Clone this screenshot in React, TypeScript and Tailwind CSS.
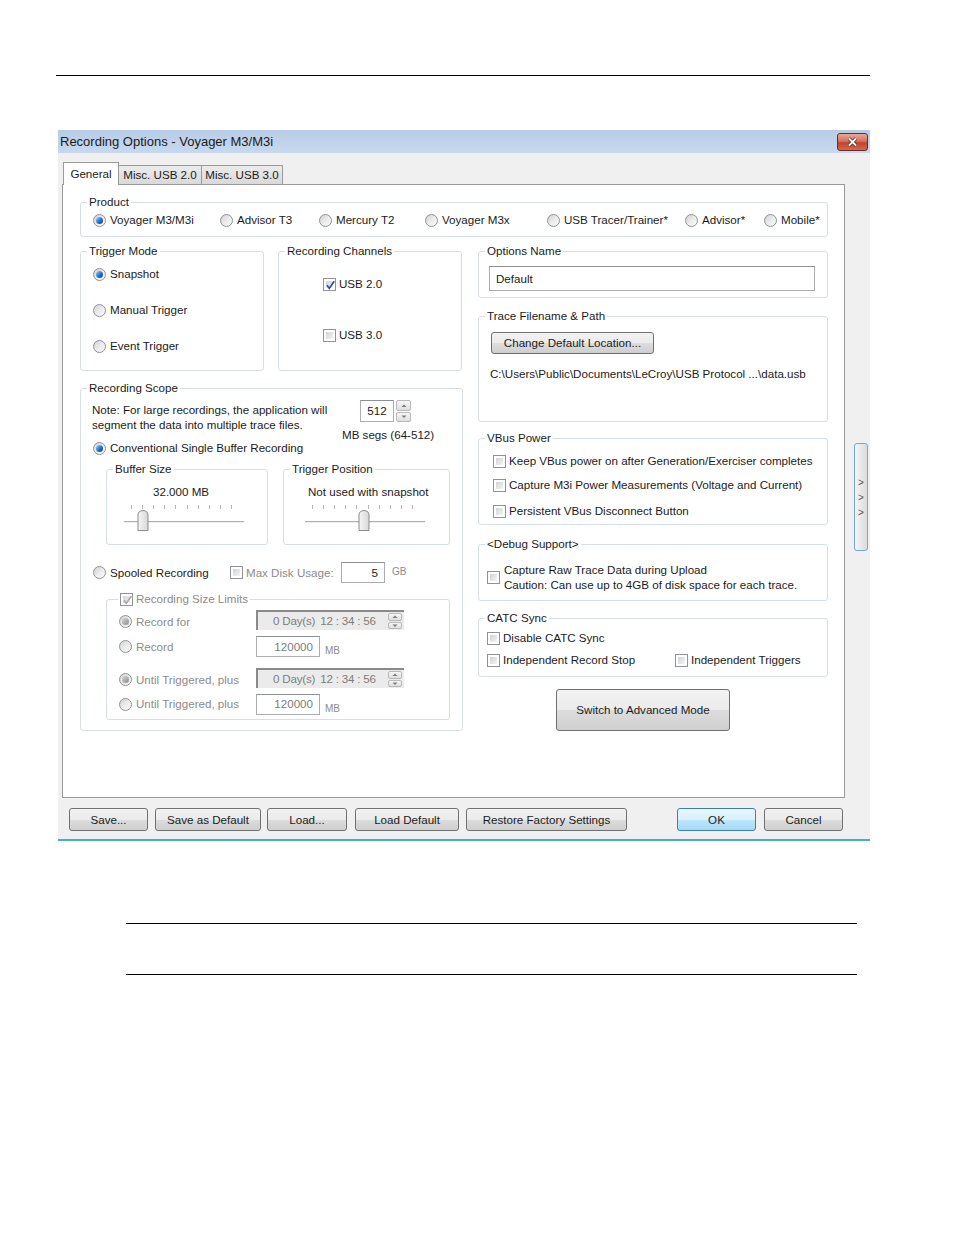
import type { ReactNode } from "react";

const DIM = "text-[#8c8c8c]";
const GROUP_BORDER = "border-[#d5dfe5]";
const BTN =
  "flex shrink-0 items-center justify-center rounded-[3px] border border-[#707070] bg-[linear-gradient(#f2f2f2,#ebebeb_50%,#dddddd_51%,#cfcfcf)] leading-[14px]";
const TEXTBOX = "border border-[#abadb3] border-t-[#8d9096] bg-white";

function Group({
  title,
  className = "",
  titleClass = "left-[6px]",
  children,
}: {
  title: ReactNode;
  className?: string;
  titleClass?: string;
  children?: ReactNode;
}) {
  return (
    <div className={`relative shrink-0 rounded-[3px] border ${GROUP_BORDER} ${className}`}>
      <span className={`absolute -top-[8px] flex bg-white px-[2px] leading-[14px] ${titleClass}`}>
        {title}
      </span>
      {children}
    </div>
  );
}

/** Fixed-width slot so a row of controls lines up with the dialog's columns. */
function Cell({ w, children }: { w: string; children: ReactNode }) {
  return <span className={`flex shrink-0 items-center ${w}`}>{children}</span>;
}

function Radio({
  label,
  checked = false,
  disabled = false,
  className = "",
}: {
  label: string;
  checked?: boolean;
  disabled?: boolean;
  className?: string;
}) {
  return (
    <span className={`flex shrink-0 items-center gap-[4px] leading-[14px] ${className}`}>
      <span className="flex h-[13px] w-[13px] shrink-0 items-center justify-center rounded-full border border-[#8f9397] bg-gradient-to-br from-[#cfd2d5] via-[#ebebeb] to-[#fbfbfb]">
        {checked ? (
          <span
            className={`h-[7px] w-[7px] rounded-full ${
              disabled
                ? "bg-gradient-to-br from-[#d8d8d8] to-[#8a8a8a]"
                : "bg-gradient-to-br from-[#9ad6ff] via-[#2a7ad0] to-[#0c3c82]"
            }`}
          />
        ) : null}
      </span>
      <span className={disabled ? DIM : ""}>{label}</span>
    </span>
  );
}

function Check({
  label,
  checked = false,
  disabled = false,
  gap = "gap-[3px]",
  className = "",
}: {
  label?: ReactNode;
  checked?: boolean;
  disabled?: boolean;
  gap?: string;
  className?: string;
}) {
  return (
    <span className={`flex shrink-0 items-center leading-[14px] ${gap} ${className}`}>
      <span className="relative h-[13px] w-[13px] shrink-0 border border-[#8f9397] bg-white p-[2px]">
        <span className="block h-full w-full bg-gradient-to-br from-[#d0d3d7] to-[#f5f5f5]" />
        {checked ? (
          <svg className="absolute inset-0" viewBox="0 0 13 13" width="13" height="13">
            <path
              d="M3 6.3 L5.3 9.4 L10.2 2.2"
              fill="none"
              stroke={disabled ? "#a8a8a8" : "#2c4f8f"}
              strokeWidth="1.7"
            />
          </svg>
        ) : null}
      </span>
      {label != null ? <span className={disabled ? DIM : ""}>{label}</span> : null}
    </span>
  );
}

function SpinArrows({ className = "" }: { className?: string }) {
  return (
    <span className={`flex shrink-0 flex-col gap-px ${className}`}>
      {["M1.5 4 L4 1.5 L6.5 4 Z", "M1.5 1.5 L4 4 L6.5 1.5 Z"].map((d) => (
        <span
          key={d}
          className="flex flex-1 items-center justify-center rounded-[2px] border border-[#b9b9b9] bg-gradient-to-b from-[#f7f7f7] to-[#dedede]"
        >
          <svg width="8" height="5" viewBox="0 0 8 5">
            <path d={d} fill="#7a7a7a" />
          </svg>
        </span>
      ))}
    </span>
  );
}

function TimeBox() {
  return (
    <span className="flex h-[20px] w-[148px] shrink-0 items-center border-l-2 border-t-2 border-[#8a8a8a] bg-[#ebebeb] pl-[15px] pr-[2px] text-[#7d7d7d]">
      <span className="tracking-[-0.2px]">0 Day(s)</span>
      <span className="ml-[5px] tracking-[-0.2px]">12 : 34 : 56</span>
      <SpinArrows className="ml-auto h-[16px] w-[14px]" />
    </span>
  );
}

function MbBox({ value }: { value: string }) {
  return (
    <span className={`flex h-[21px] w-[64px] shrink-0 items-center justify-end pr-[6px] text-[#7d7d7d] ${TEXTBOX}`}>
      {value}
    </span>
  );
}

function Slider({ thumb, track }: { thumb: string; track: string }) {
  return (
    <div className={`relative mt-[5px] h-[27px] w-[120px] ${track}`}>
      <div className="ml-[7px] flex w-[101px] justify-between pt-px">
        {Array.from({ length: 10 }, (_, i) => (
          <span key={i} className="h-[4px] w-px bg-[#b5b5b5]" />
        ))}
      </div>
      <div className="absolute left-0 right-0 top-[17px] h-[2px] border-t border-[#b0b0b0] bg-[#eeeeee]" />
      <svg className={`absolute top-[6px] ${thumb}`} width="12" height="21" viewBox="0 0 12 21">
        <defs>
          <linearGradient id="thumbfill" x1="0" x2="1" y1="0" y2="0">
            <stop offset="0" stopColor="#f6f6f6" />
            <stop offset="1" stopColor="#d8d8d8" />
          </linearGradient>
        </defs>
        <path
          d="M1 20.5 V5 Q1 0.8 6 0.5 Q11 0.8 11 5 V20.5 Z"
          fill="url(#thumbfill)"
          stroke="#8c8c8c"
        />
      </svg>
    </div>
  );
}

function CloseButton() {
  return (
    <span className="flex h-[18px] w-[31px] items-center justify-center rounded-[3px] border border-[#6f2a22] bg-[linear-gradient(#e9a99b,#d8705e_45%,#c2432f_55%,#cf6a54)]">
      <svg width="11" height="10" viewBox="0 0 11 10">
        <path d="M2 1.5 L9 8.5 M9 1.5 L2 8.5" stroke="#5a1a12" strokeWidth="3.2" />
        <path d="M2 1.5 L9 8.5 M9 1.5 L2 8.5" stroke="#ffffff" strokeWidth="1.8" />
      </svg>
    </span>
  );
}

function Tabs() {
  return (
    <div className="ml-px flex h-[22px] items-end">
      <span className="relative z-10 -mb-px flex h-[23px] w-[56px] items-center justify-center border border-b-0 border-[#9a9a9a] bg-white">
        General
      </span>
      <span className="flex h-[19px] w-[83px] items-center justify-center border border-b-0 border-l-0 border-[#9a9a9a] bg-gradient-to-b from-[#ececec] to-[#d9d9d9]">
        Misc. USB 2.0
      </span>
      <span className="flex h-[19px] w-[81px] items-center justify-center border border-b-0 border-l-0 border-[#9a9a9a] bg-gradient-to-b from-[#ececec] to-[#d9d9d9]">
        Misc. USB 3.0
      </span>
    </div>
  );
}

function LeftColumn() {
  return (
    <div className="flex w-[383px] shrink-0 flex-col">
      <div className="flex gap-[14px]">
        <Group title="Trigger Mode" className="flex h-[120px] w-[184px] flex-col gap-[22px] pl-[12px] pt-[15px]">
          <Radio label="Snapshot" checked />
          <Radio label="Manual Trigger" />
          <Radio label="Event Trigger" />
        </Group>
        <Group title="Recording Channels" className="flex h-[120px] w-[184px] flex-col gap-[37px] pl-[44px] pt-[25px]">
          <Check label="USB 2.0" checked />
          <Check label="USB 3.0" />
        </Group>
      </div>

      <Group title="Recording Scope" className="mt-[17px] flex h-[343px] w-[383px] flex-col pl-[11px] pt-[11px]">
        <div className="flex h-[41px]">
          <p className="w-[250px] pt-[2px] leading-[15px]">
            Note: For large recordings, the application will
            <br />
            segment the data into multiple trace files.
          </p>
          <div className="flex flex-col">
            <div className="ml-[18px] flex h-[22px] gap-[2px]">
              <span className={`flex h-[22px] w-[34px] items-center justify-center ${TEXTBOX}`}>512</span>
              <SpinArrows className="h-[22px] w-[15px]" />
            </div>
            <span className="mt-[6px] leading-[14px]">MB segs (64-512)</span>
          </div>
        </div>
        <Radio label="Conventional Single Buffer Recording" checked className="ml-px" />

        <div className="ml-[14px] mt-[14px] flex gap-[15px]">
          <Group title="Buffer Size" className="flex h-[76px] w-[162px] flex-col pt-[15px]">
            <span className="ml-[46px] leading-[14px]">32.000 MB</span>
            <Slider track="ml-[17px]" thumb="left-[13px]" />
          </Group>
          <Group title="Trigger Position" className="flex h-[76px] w-[167px] flex-col pt-[15px]">
            <span className="ml-[24px] leading-[14px]">Not used with snapshot</span>
            <Slider track="ml-[21px]" thumb="left-[53px]" />
          </Group>
        </div>

        <div className="ml-px mt-[17px] flex h-[21px] items-center">
          <Cell w="w-[137px]">
            <Radio label="Spooled Recording" />
          </Cell>
          <Cell w="w-[111px]">
            <Check label="Max Disk Usage:" disabled />
          </Cell>
          <span className={`flex h-[21px] w-[44px] items-center justify-end pr-[6px] ${TEXTBOX}`}>5</span>
          <span className={`ml-[7px] self-start pt-[2px] text-[10px] ${DIM}`}>GB</span>
        </div>

        <Group
          title={<Check label="Recording Size Limits" checked disabled />}
          titleClass="left-[11px]"
          className="ml-[14px] mt-[16px] flex h-[121px] w-[344px] flex-col pl-[12px] pt-[10px]"
        >
          <div className="flex h-[20px] items-center">
            <Cell w="w-[137px]">
              <Radio label="Record for" checked disabled className="mt-[3px]" />
            </Cell>
            <TimeBox />
          </div>
          <div className="mt-[6px] flex h-[21px] items-center">
            <Cell w="w-[137px]">
              <Radio label="Record" disabled />
            </Cell>
            <MbBox value="120000" />
            <span className={`ml-[5px] mt-[8px] text-[10px] ${DIM}`}>MB</span>
          </div>
          <div className="mt-[11px] flex h-[20px] items-center">
            <Cell w="w-[137px]">
              <Radio label="Until Triggered, plus" checked disabled className="mt-[3px]" />
            </Cell>
            <TimeBox />
          </div>
          <div className="mt-[6px] flex h-[20px] items-center">
            <Cell w="w-[137px]">
              <Radio label="Until Triggered, plus" disabled />
            </Cell>
            <MbBox value="120000" />
            <span className={`ml-[5px] mt-[8px] text-[10px] ${DIM}`}>MB</span>
          </div>
        </Group>
      </Group>
    </div>
  );
}

function RightColumn() {
  return (
    <div className="flex w-[350px] shrink-0 flex-col">
      <Group title="Options Name" className="h-[47px] w-[350px] pl-[10px] pt-[14px]">
        <div className={`flex h-[25px] w-[326px] items-center pl-[6px] ${TEXTBOX}`}>Default</div>
      </Group>

      <Group title="Trace Filename & Path" className="mt-[18px] flex h-[106px] w-[350px] flex-col pl-[12px] pt-[15px]">
        <span className={`${BTN} h-[22px] w-[163px]`}>Change Default Location...</span>
        <span className="-ml-px mt-[13px] leading-[14px]">
          C:\Users\Public\Documents\LeCroy\USB Protocol ...\data.usb
        </span>
      </Group>

      <Group title="VBus Power" className="mt-[16px] flex h-[87px] w-[350px] flex-col pl-[14px] pt-[15px]">
        <Check label="Keep VBus power on after Generation/Exerciser completes" />
        <Check label="Capture M3i Power Measurements (Voltage and Current)" className="mt-[10px]" />
        <Check label="Persistent VBus Disconnect Button" className="mt-[12px]" />
      </Group>

      <Group title="<Debug Support>" className="mt-[19px] h-[57px] w-[350px] pl-[8px] pt-[17px]">
        <Check
          gap="gap-[4px]"
          label={
            <span className="block leading-[15px]">
              Capture Raw Trace Data during Upload
              <br />
              Caution: Can use up to 4GB of disk space for each trace.
            </span>
          }
        />
      </Group>

      <Group title="CATC Sync" className="mt-[17px] flex h-[59px] w-[350px] flex-col pl-[8px] pt-[12px]">
        <Check label="Disable CATC Sync" />
        <div className="mt-[8px] flex items-center">
          <Cell w="w-[188px]">
            <Check label="Independent Record Stop" />
          </Cell>
          <Check label="Independent Triggers" />
        </div>
      </Group>

      <span className={`${BTN} ml-[78px] mt-[12px] h-[42px] w-[174px]`}>Switch to Advanced Mode</span>
    </div>
  );
}

function Dialog() {
  return (
    <div className="ml-[58px] mt-[54px] flex h-[711px] w-[812px] flex-col">
      <div className="flex h-[23px] shrink-0 items-center justify-between bg-gradient-to-b from-[#b7cce6] to-[#c8d9ee] pl-[2px] pr-[2px] text-[13px]">
        <span>Recording Options - Voyager M3/M3i</span>
        <CloseButton />
      </div>

      <div className="flex flex-1 flex-col border-b-2 border-[#47a9dc] bg-[#f0f0f0] pt-[9px]">
        <div className="flex">
          <div className="ml-[4px] w-[783px] shrink-0">
            <Tabs />
            <div className="h-[614px] border border-[#9a9a9a] bg-white pl-[17px] pt-[17px]">
              <Group title="Product" className="h-[35px] w-[748px]">
                <div className="flex h-full items-center pl-[12px] pt-px">
                  <Cell w="w-[127px]">
                    <Radio label="Voyager M3/M3i" checked />
                  </Cell>
                  <Cell w="w-[99px]">
                    <Radio label="Advisor T3" />
                  </Cell>
                  <Cell w="w-[106px]">
                    <Radio label="Mercury T2" />
                  </Cell>
                  <Cell w="w-[122px]">
                    <Radio label="Voyager M3x" />
                  </Cell>
                  <Cell w="w-[138px]">
                    <Radio label="USB Tracer/Trainer*" />
                  </Cell>
                  <Cell w="w-[79px]">
                    <Radio label="Advisor*" />
                  </Cell>
                  <Radio label="Mobile*" />
                </div>
              </Group>

              <div className="mt-[14px] flex gap-[15px]">
                <LeftColumn />
                <RightColumn />
              </div>
            </div>
          </div>

          <div className="ml-[9px] mt-[281px] flex h-[108px] w-[14px] flex-col items-center justify-center rounded-[3px] border border-[#6fa8d9] bg-gradient-to-r from-[#f5f5f5] to-[#dcdcdc] text-[10px] leading-[15px] text-[#555555]">
            <span>&gt;</span>
            <span>&gt;</span>
            <span>&gt;</span>
          </div>
        </div>

        <div className="mt-[10px] flex pl-[11px]">
          <span className={`${BTN} h-[23px] w-[79px]`}>Save...</span>
          <span className={`${BTN} ml-[7px] h-[23px] w-[106px]`}>Save as Default</span>
          <span className={`${BTN} ml-[6px] h-[23px] w-[80px]`}>Load...</span>
          <span className={`${BTN} ml-[8px] h-[23px] w-[104px]`}>Load Default</span>
          <span className={`${BTN} ml-[7px] h-[23px] w-[161px]`}>Restore Factory Settings</span>
          <span className="ml-[50px] flex h-[23px] w-[79px] items-center justify-center rounded-[3px] border border-[#3c7fb1] bg-[linear-gradient(#eaf6fd,#d9f0fc_50%,#bee6fd_51%,#a7d9f5)]">
            OK
          </span>
          <span className={`${BTN} ml-[8px] h-[23px] w-[79px]`}>Cancel</span>
        </div>
      </div>
    </div>
  );
}

export default function App() {
  return (
    <div className="h-[1235px] w-[954px] bg-white pt-[75px] font-['Liberation_Sans',Arial,sans-serif] text-[11.6px] text-[#1b1b1b]">
      <div className="ml-[56px] h-px w-[814px] bg-black" />
      <Dialog />
      <div className="ml-[126px] mt-[82px] h-px w-[731px] bg-black" />
      <div className="ml-[126px] mt-[50px] h-px w-[731px] bg-black" />
    </div>
  );
}
